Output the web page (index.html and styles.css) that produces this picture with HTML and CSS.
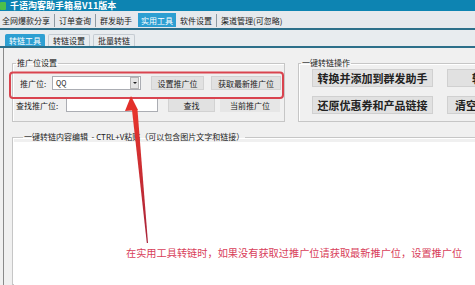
FILE: index.html
```html
<!DOCTYPE html>
<html lang="zh-CN">
<head>
  <meta charset="UTF-8">
  <title>千语淘客助手箱易V11版本</title>
  <link rel="stylesheet" href="styles.css">
</head>
<body>
<div class="title">
  <span class="logo"></span>
  <span>千语淘客助手箱易V11版本</span>
</div>
<div class="tabs">
  <span class="tab first">全网爆款分享</span>
  <span class="tab">订单查询</span>
  <span class="tab">群发助手</span>
  <span class="tab on">实用工具</span>
  <span class="tab">软件设置</span>
  <span class="tab">渠道管理(可忽略)</span>
</div>
<div class="subtabs">
  <span class="subtab on">转链工具</span>
  <span class="subtab">转链设置</span>
  <span class="subtab">批量转链</span>
</div>
<div class="main">
  <div class="top">
    <fieldset class="group pid">
      <legend>推广位设置</legend>
      <div class="row row-pid">
        <span class="label">推广位:</span>
        <span class="combo">QQ<span class="drop"></span></span>
        <button class="btn set">设置推广位</button>
        <button class="btn fetch">获取最新推广位</button>
      </div>
      <div class="row row-find">
        <span class="label">查找推广位:</span>
        <span class="input"></span>
        <button class="btn find">查找</button>
        <button class="btn current">当前推广位</button>
      </div>
    </fieldset>
    <fieldset class="group ops">
      <legend>一键转链操作</legend>
      <div class="ops-grid">
        <button class="big">转换并添加到群发助手</button>
        <button class="big side convert">转换</button>
        <button class="big">还原优惠券和产品链接</button>
        <button class="big side clear">清空</button>
      </div>
    </fieldset>
  </div>
  <fieldset class="group editor">
    <legend>一键转链内容编辑&nbsp; - CTRL+V粘贴（可以包含图片文字和链接）</legend>
    <div class="paper"></div>
  </fieldset>
</div>

<!-- annotation drawn over the screenshot -->
<svg class="marks" width="475" height="285" viewBox="0 0 475 285">
  <defs>
    <linearGradient id="shaft" x1="0" y1="0" x2="0" y2="1">
      <stop offset="0" stop-color="#e8352c"/>
      <stop offset="1" stop-color="#a8243a"/>
    </linearGradient>
  </defs>
  <rect x="10" y="72.5" width="273" height="25.5" rx="3" fill="none" stroke="#d9444f" stroke-width="2"/>
  <polygon points="131,96 125,111 138,110" fill="#e3302a"/>
  <polygon points="132,110 137.5,110 148,243 146.8,243" fill="url(#shaft)"/>
</svg>
<div class="note">在实用工具转链时，如果没有获取过推广位请获取最新推广位，设置推广位</div>
</body>
</html>
```

FILE: styles.css
```css
body {
  margin: 0;
  width: 475px;
  height: 285px;
  overflow: hidden;
  position: relative;
  background: #f0f0f0;
  font-family: "Noto Sans CJK SC", "Liberation Sans", sans-serif;
  font-size: 8px;
  color: #222;
}
.title {
  height: 11px;
  background: #0d84b2;
  color: #fff;
  font-weight: bold;
  font-size: 9px;
  display: flex;
  align-items: center;
  gap: 4px;
}
.logo {
  width: 6px;
  height: 8px;
  background: #4cbf4a;
  border-radius: 1px;
}
.tabs {
  height: 17px;
  background: #e6e9ed;
  border-bottom: 2px solid #2c6f8a;
  display: flex;
  align-items: flex-end;
}
.tab {
  line-height: 13px;
  padding: 0 4px;
  border-left: 1px solid #8d9aa3;
  margin-bottom: 1px;
}
.tab.first {
  border-left: none;
  padding-left: 2px;
}
.tab.on {
  background: #2d9fd2;
  color: #fff;
  border-left: none;
  margin-left: 2px;
  padding: 1px 3px 0;
}
.tab.on + .tab {
  border-left: none;
}
.subtabs {
  height: 16px;
  background: #e8ecef;
  border-bottom: 2px solid #2c6f8a;
  display: flex;
  align-items: flex-end;
  gap: 3px;
  padding-left: 5px;
}
.subtab {
  line-height: 11px;
  padding: 0 4px;
  border: 1px solid #c5ccd2;
  border-bottom: none;
  border-radius: 2px 2px 0 0;
}
.subtab.on {
  background: #2d9fd2;
  border-color: #2d9fd2;
  color: #fff;
  padding: 0 3px;
}
.main {
  margin-left: 3px;
  border-left: 1px solid #8a8a8a;
  padding: 10px 0 0 8px;
  height: 227px;
  display: flex;
  flex-direction: column;
}
.top {
  display: flex;
  gap: 13px;
}
.group {
  margin: 0;
  border: 1px solid #c6c6c6;
  box-shadow: inset 1px 1px 0 #fff;
}
.group legend {
  font-size: 8px;
  line-height: 10px;
  padding: 0 1px;
}
.pid {
  width: 271px;
  flex-shrink: 0;
  padding: 8px 0 9px 0;
}
.pid legend {
  margin-left: 3px;
}
.row {
  display: flex;
  align-items: center;
  height: 14px;
}
.row-pid {
  padding-left: 7px;
}
.row-find {
  margin-top: 8px;
  padding-left: 3px;
}
.label {
  width: 32px;
}
.row-find .label {
  width: 50px;
}
.combo {
  width: 84px;
  height: 12px;
  background: #fff;
  border: 1px solid #abadb3;
  display: flex;
  align-items: center;
  justify-content: space-between;
  padding-left: 3px;
  box-sizing: content-box;
  font-size: 7px;
  margin-right: 10px;
}
.drop {
  width: 7px;
  height: 10px;
  margin-right: 1px;
  background: #e4e4e4;
  border: 1px solid #b5b5b5;
  position: relative;
}
.drop::after {
  content: "";
  position: absolute;
  left: 1.5px;
  top: 4px;
  border-left: 2px solid transparent;
  border-right: 2px solid transparent;
  border-top: 2px solid #222;
}
.input {
  width: 90px;
  height: 12px;
  background: #fff;
  border: 1px solid #abadb3;
  margin-right: 10px;
}
.btn {
  font: inherit;
  color: #222;
  height: 14px;
  padding: 0;
  background: #e1e1e1;
  border: 1px solid #d2d2d2;
}
.set {
  width: 53px;
  margin-right: 7px;
}
.fetch {
  width: 70px;
}
.find {
  width: 47px;
  margin-right: 5px;
}
.current {
  width: 60px;
  background: #e6e6e6;
  border-color: #e6e6e6;
}
.ops {
  width: 200px;
  flex-shrink: 0;
  padding: 1px 0 0 13px;
}
.ops legend {
  margin-left: -11px;
}
.ops-grid {
  display: grid;
  grid-template-columns: 121px 121px;
  column-gap: 14px;
  row-gap: 9px;
}
.big {
  height: 18px;
  padding: 0;
  font-family: "Noto Sans CJK SC", sans-serif;
  font-size: 11px;
  font-weight: bold;
  color: #222;
  background: #e1e1e1;
  border: 1px solid #d0d0d0;
  white-space: nowrap;
  overflow: hidden;
}
.side {
  text-align: left;
}
.convert {
  padding-left: 24px;
}
.clear {
  padding-left: 7px;
}
.editor {
  margin: 10px -12px 0 0;
  padding: 0 0 0 1px;
  flex: 1;
  min-height: 0;
}
.editor legend {
  margin-left: 9px;
}
.paper {
  background: #fff;
  height: 160px;
}
.marks {
  position: absolute;
  left: 0;
  top: 0;
}
.note {
  position: absolute;
  left: 126px;
  top: 246px;
  font-size: 10.2px;
  line-height: 13px;
  color: #d8405a;
  white-space: nowrap;
}
```
